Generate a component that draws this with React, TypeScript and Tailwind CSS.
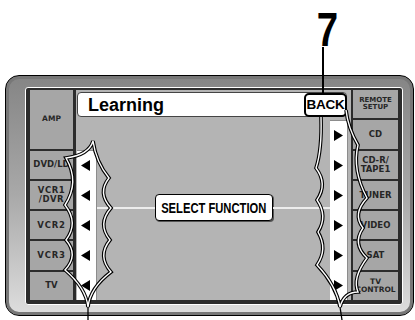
import React from "react";

const LeftTri = () => (
  <svg width="9" height="11" viewBox="0 0 9 11">
    <path d="M0 5.5 L9 0 L9 11 Z" fill="#000" />
  </svg>
);
const RightTri = () => (
  <svg width="9" height="11" viewBox="0 0 9 11">
    <path d="M9 5.5 L0 0 L0 11 Z" fill="#000" />
  </svg>
);

function Btn({ children, className = "" }: { children: React.ReactNode; className?: string }) {
  return (
    <div
      className={
        "flex items-center justify-center bg-[#a6a6a6] text-center font-bold text-[#262626] leading-[1.05] whitespace-nowrap overflow-hidden " +
        className
      }
    >
      {children}
    </div>
  );
}

export default function App() {
  const leftCallout =
    "M93 141 Q89 155 66 158 Q80 182 65 205 Q79 223 66 240 Q79 255 65 270 Q86 288 88 307 Q90 288 111 272 Q97 256 110 240 Q97 224 111 208 Q97 193 109 178 Q96 162 93 141 Z";
  const rightCallout =
    "M321 117 Q322 150 316 168 Q328 184 317 200 Q328 216 318 232 Q328 249 317 265 Q336 285 340 307 Q344 292 358 292 Q352 278 367 258 Q352 244 363 228 Q352 214 367 198 Q352 170 358 145 Q348 128 346 110";
  return (
    <div className="relative w-[415px] h-[320px] bg-white overflow-hidden font-['Liberation_Sans',Arial,sans-serif]">
      <div className="flex flex-col pt-[75px] pl-[5px]">
        {/* outer bezel */}
        <div className="w-[409px] h-[241px] rounded-[14px] border border-black bg-linear-to-b from-[#858585] via-[#a9a9a9] to-[#dedede] shadow-[inset_0_0_0_3px_#777777] pt-[11px] pl-[19px] pr-[10px] pb-[10px]">
          {/* inner panel */}
          <div className="w-full h-full border border-white rounded-[3px] bg-[#2c2c2c] flex pl-[4px] pr-[4px] pt-[2px] pb-[4px] gap-0 font-['DejaVu_Sans',sans-serif]">
            {/* left column */}
            <div className="w-[43px] grid grid-rows-7 gap-[2px]">
              <Btn className="row-span-2 text-[7.5px]">AMP</Btn>
              <Btn className="text-[8.5px]">DVD/LD</Btn>
              <Btn className="text-[8.5px] tracking-[0.5px]">
                VCR1
                <br />
                /DVR
              </Btn>
              <Btn className="text-[8.5px] tracking-[0.8px]">VCR2</Btn>
              <Btn className="text-[8.5px] tracking-[0.8px]">VCR3</Btn>
              <Btn className="text-[8.5px]">TV</Btn>
            </div>
            {/* screen */}
            <div className="ml-[3px] w-[275px] bg-[#b4b4b4] flex flex-col font-['Liberation_Sans',Arial,sans-serif]">
              <div className="pt-[2px] pl-[1px] pr-[4px]">
                <div className="relative h-[25px] bg-white border border-[#444] rounded-[4px] flex items-center pl-[10px]">
                  <span className="text-[18px] font-bold text-black leading-none">Learning</span>
                  <div className="absolute right-[-1px] top-[0px] bottom-[-1px] w-[43px] bg-white border-2 border-black rounded-[5px] flex items-center justify-center">
                    <span className="text-[13.5px] font-bold text-black leading-none tracking-[-0.2px]">BACK</span>
                  </div>
                </div>
              </div>
              <div className="flex items-start h-[183px]">
                <div className="ml-[1px] w-[20px] mt-[33px] h-[150px] bg-white border-t border-r border-[#8c8c8c] flex flex-col">
                  {[0, 1, 2, 3, 4].map((i) => (
                    <div key={i} className="h-[30px] flex items-center pl-[4px]">
                      <LeftTri />
                    </div>
                  ))}
                </div>
                <div className="flex-1 pt-[77px]">
                  <div className="flex items-center">
                    <div className="flex-1 h-[2px] bg-[#ededed]" />
                    <div className="w-[118px] h-[27px] bg-white border-[1.5px] border-black rounded-[4px] shadow-[1px_1px_0_#555] flex items-center justify-center">
                      <span className="shrink-0 whitespace-nowrap text-[14px] font-bold text-black leading-none scale-x-[0.8]">
                        SELECT FUNCTION
                      </span>
                    </div>
                    <div className="flex-1 h-[2px] bg-[#ededed]" />
                  </div>
                </div>
                <div className="w-[18px] mt-[3px] h-[180px] bg-white border-t border-r border-[#8c8c8c] flex flex-col">
                  {[0, 1, 2, 3, 4, 5].map((i) => (
                    <div key={i} className="h-[30px] flex items-center pl-[4px]">
                      <RightTri />
                    </div>
                  ))}
                </div>
                <div className="w-[3px]" />
              </div>
            </div>
            {/* right column */}
            <div className="ml-[2px] w-[45px] grid grid-rows-7 gap-[2px]">
              <Btn className="text-[7px]">
                REMOTE
                <br />
                SETUP
              </Btn>
              <Btn className="text-[8.5px]">CD</Btn>
              <Btn className="text-[8.5px]">
                CD-R/
                <br />
                TAPE1
              </Btn>
              <Btn className="text-[8.5px]">TUNER</Btn>
              <Btn className="text-[8.5px]">VIDEO</Btn>
              <Btn className="text-[8.5px]">SAT</Btn>
              <Btn className="text-[7.5px]">
                TV
                <br />
                CONTROL
              </Btn>
            </div>
          </div>
        </div>
      </div>

      {/* annotation: number 7 */}
      <div className="absolute left-[314px] top-[6px] w-[27px] flex justify-center">
        <span className="text-[48px] font-bold leading-none text-black scale-x-[0.8]">7</span>
      </div>
      <div className="absolute left-[322px] top-[47px] w-[1.5px] h-[46px] bg-black" />

      {/* callout outlines */}
      <svg className="absolute left-0 top-0 pointer-events-none" width="415" height="320" viewBox="0 0 415 320">
        <g fill="none" strokeLinejoin="miter" strokeLinecap="butt">
          <path d={leftCallout} stroke="#000" strokeWidth="3.6" />
          <path d={leftCallout} stroke="#fff" strokeWidth="1.4" />
          <path d={rightCallout} stroke="#000" strokeWidth="3.6" />
          <path d={rightCallout} stroke="#fff" strokeWidth="1.4" />
          <path d="M88 307 L88 320" stroke="#000" strokeWidth="1.3" />
          <path d="M340 307 L342 320" stroke="#000" strokeWidth="1.3" />
        </g>
      </svg>
    </div>
  );
}
